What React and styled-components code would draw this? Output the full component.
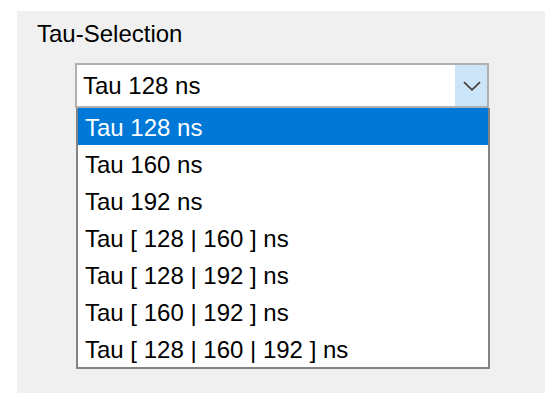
import React from 'react'
import styled, { createGlobalStyle } from 'styled-components';

const options = [
  'Tau 128 ns',
  'Tau 160 ns',
  'Tau 192 ns',
  'Tau [ 128 | 160 ] ns',
  'Tau [ 128 | 192 ] ns',
  'Tau [ 160 | 192 ] ns',
  'Tau [ 128 | 160 | 192 ] ns',
];

const App = () => {
  const selected = 0;
  return (
    <>
      <GlobalStyle />
      <Panel>
        <Label>Tau-Selection</Label>
        <ComboWrap>
          <Combo>
            <ComboText>{options[selected]}</ComboText>
            <DropButton>
              <svg width="18" height="10" viewBox="0 0 18 10">
                <path d="M1 1.2 L9 8.8 L17 1.2" fill="none" stroke="#3f3f3f" strokeWidth="1.7" />
              </svg>
            </DropButton>
          </Combo>
          <OptionList>
            {options.map((opt, i) => (
              <Option key={opt} $active={i === selected}>{opt}</Option>
            ))}
          </OptionList>
        </ComboWrap>
      </Panel>
    </>
  )
}

export default App

const GlobalStyle = createGlobalStyle`
body {
  margin: 0;
  background: #ffffff;
  font-family: "Liberation Sans", Arial, sans-serif;
}
`;

const Panel = styled.div`
margin: 11px 0 0 17px;
width: 528px;
height: 382px;
background: #f0f0f0;
padding: 10px 0 0 20px;
box-sizing: border-box;
`;

const Label = styled.div`
font-size: 24px;
line-height: 26px;
color: #000;
`;

const ComboWrap = styled.div`
margin: 16px 0 0 38px;
width: 414px;
`;

const Combo = styled.div`
height: 45px;
border: 2px solid #b0b0b0;
background: #fff;
box-sizing: border-box;
display: flex;
align-items: stretch;
`;

const ComboText = styled.div`
flex: 1;
padding: 1px 0 0 6px;
font-size: 24px;
line-height: 39px;
color: #000;
`;

const DropButton = styled.div`
width: 31px;
background: #cce4f7;
display: flex;
align-items: center;
justify-content: center;
padding-left: 1px;
`;

const OptionList = styled.div`
margin-left: 1px;
width: 414px;
box-sizing: border-box;
border: 2px solid #838383;
border-top: none;
background: #fff;
`;

const Option = styled.div`
height: 37px;
box-sizing: border-box;
padding: 3px 0 0 7px;
font-size: 24px;
line-height: 34px;
white-space: nowrap;
color: ${p => p.$active ? '#fff' : '#000'};
background: ${p => p.$active ? '#0078d7' : 'transparent'};
`;
